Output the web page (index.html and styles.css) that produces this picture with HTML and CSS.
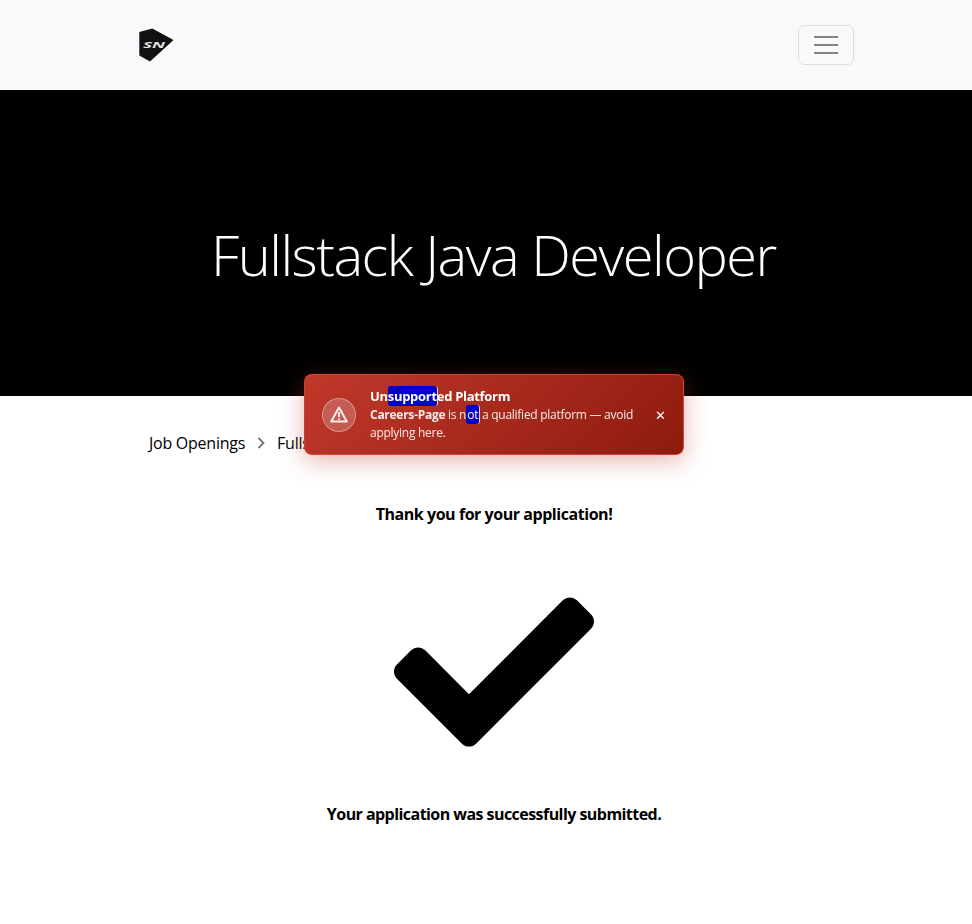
FILE: index.html
```html
<!DOCTYPE html>
<html lang="en">
<head>
<meta charset="utf-8">
<title>Fullstack Java Developer</title>
<link rel="stylesheet" href="styles.css">
</head>
<body>
<nav class="navbar">
  <a class="brand" href="#" aria-label="SN">
    <svg width="36" height="34" viewBox="0 0 36 34"><polygon points="1.3,4 14.3,0.5 35.5,12 12,33.5 1.3,27.5" fill="#111"/><text class="logo-text" x="5" y="20" textLength="22" lengthAdjust="spacingAndGlyphs">SN</text></svg>
  </a>
  <button class="toggler" aria-label="Menu">
    <svg width="24" height="18" viewBox="0 0 24 18"><path d="M0 1h24M0 9h24M0 17h24" stroke="#808183" stroke-width="2" fill="none"/></svg>
  </button>
</nav>
<header class="hero"><h1>Fullstack Java Developer</h1></header>
<ol class="crumbs">
  <li><a href="#">Job Openings</a></li>
  <li class="sep"><svg width="8" height="12" viewBox="0 0 8 12"><path d="M1.5 1l5 5-5 5" stroke="#6c757d" stroke-width="1.8" fill="none"/></svg></li>
  <li><a href="#">Fullstack Java Developer</a></li>
</ol>
<main class="result">
  <p class="msg thanks">Thank you for your application!</p>
  <svg class="check" width="200" height="200" viewBox="0 0 512 512"><path d="M173.898 439.404l-166.4-166.4c-9.997-9.997-9.997-26.206 0-36.204l36.203-36.204c9.997-9.998 26.207-9.998 36.204 0L192 312.69 432.095 72.596c9.997-9.997 26.207-9.997 36.204 0l36.203 36.204c9.997 9.997 9.997 26.206 0 36.204l-294.4 294.401c-9.998 9.997-26.207 9.997-36.204-.001z"/></svg>
  <p class="msg submitted">Your application was successfully submitted.</p>
</main>
<aside class="toast">
  <span class="toast-icon">
    <svg width="18" height="17" viewBox="0 0 18 17"><path d="M9 1.5L1.2 15.5h15.6z" fill="none" stroke="#fff" stroke-opacity=".9" stroke-width="2" stroke-linejoin="round"/><path d="M9 6v5M9 12.2v1.6" stroke="#fff" stroke-opacity=".9" stroke-width="1.9" fill="none"/></svg>
  </span>
  <div class="toast-body">
    <div class="toast-title">Un<mark class="hl">support</mark>ed Platform</div>
    <div class="toast-text"><strong>Careers-Page</strong> is n<mark class="hl hl-small">ot</mark> a qualified platform — avoid applying here.</div>
  </div>
  <span class="toast-close">✕</span>
</aside>
</body>
</html>
```
FILE: styles.css
```css
* { box-sizing: border-box; }
html, body { margin: 0; overflow-x: hidden; }
body { font-family: "Open Sans", sans-serif; font-size: 16px; color: #000; background: #fff; height: 924px; }
a { color: inherit; text-decoration: none; }
.navbar { height: 90px; background: #f8f9fa; display: flex; align-items: center; justify-content: space-between; padding: 0 118px 0 138px; }
.brand { display: flex; }
.toggler { width: 56px; height: 40px; background: transparent; border: 1px solid rgba(0,0,0,.1); border-radius: 6px; display: flex; align-items: center; justify-content: center; padding: 0; }
.logo-text { font: italic 700 9px "Open Sans", sans-serif; fill: #e4e4e4; }
.hero { height: 306px; background: #000; display: flex; align-items: center; justify-content: center; padding-left: 15px; padding-top: 24px; }
.hero h1 { margin: 0; font-weight: 300; font-size: 56px; line-height: 1.2; color: #fff; letter-spacing: -1.5px; }
.crumbs { list-style: none; margin: 0; padding: 0 0 0 149px; display: flex; align-items: center; height: 94px; gap: 12px; letter-spacing: -.25px; }
.crumbs li { white-space: nowrap; }
.sep { display: flex; }
.result { padding-left: 16px; display: flex; flex-direction: column; align-items: center; }
.msg { margin: 0; font-weight: 700; line-height: 24px; }
.thanks { margin-bottom: 46px; margin-top: 12px; letter-spacing: -.45px; }
.submitted { letter-spacing: -.55px; }
.check { display: block; margin-bottom: 30px; }
.toast { position: fixed; left: 304px; top: 374px; width: 380px; height: 81px; display: flex; align-items: center; padding: 0 16px 0 17px; border-radius: 8px; border: 1px solid rgba(231,76,60,.7); background: linear-gradient(135deg, #c0392b, #8e1a0e); box-shadow: 0 6px 24px rgba(192,57,43,.38); color: #fff; }
.toast-icon { width: 34px; height: 34px; flex: none; border-radius: 50%; background: rgba(255,255,255,.2); border: 1px solid rgba(255,255,255,.35); display: flex; align-items: center; justify-content: center; margin-right: 14px; }
.toast-body { flex: 1; min-width: 0; position: relative; top: -1px; }
.toast-title { font-size: 13px; font-weight: 700; line-height: 18px; letter-spacing: -.3px; }
.toast-text { font-size: 12px; line-height: 18px; color: rgba(255,255,255,.9); letter-spacing: -.27px; position: relative; top: 1px; }
.toast-text strong { font-weight: 700; }
.hl { background: #0000c8; color: #fff; border-radius: 3px; padding: 1px 0; box-shadow: 1px 0 0 rgba(255,255,255,.75); }
.hl-small { padding: 1px; }
.toast-close { flex: none; font-size: 13px; width: 14px; text-align: center; margin-left: 14px; }
```
